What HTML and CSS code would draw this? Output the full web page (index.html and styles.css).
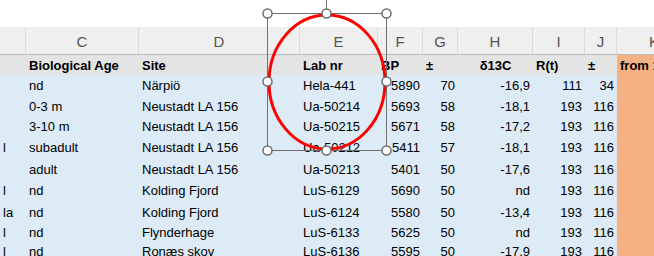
FILE: index.html
```html
<!DOCTYPE html>
<html>
<head>
<meta charset="utf-8">
<link rel="stylesheet" href="styles.css">
</head>
<body>
<div class="sheet">
  <div class="topbar"></div>
  <div class="grid colheads">
    <div class="ch"></div><div class="ch">C</div><div class="ch">D</div><div class="ch">E</div><div class="ch">F</div><div class="ch">G</div><div class="ch">H</div><div class="ch">I</div><div class="ch">J</div><div class="ch k">K</div>
  </div>
  <div class="grid row hdr h20">
    <div class="c"></div><div class="c">Biological Age</div><div class="c">Site</div><div class="c">Lab nr</div><div class="c">BP</div><div class="c">±</div><div class="c mid">δ13C</div><div class="c">R(t)</div><div class="c">±</div><div class="c org">from 1</div>
  </div>
  <div class="grid row h21">
    <div class="c"></div><div class="c">nd</div><div class="c">Närpiö</div><div class="c">Hela-441</div><div class="c r">5890</div><div class="c r">70</div><div class="c r">-16,9</div><div class="c r">111</div><div class="c r">34</div><div class="c org"></div>
  </div>
  <div class="grid row h20">
    <div class="c"></div><div class="c">0-3 m</div><div class="c">Neustadt LA 156</div><div class="c">Ua-50214</div><div class="c r">5693</div><div class="c r">58</div><div class="c r">-18,1</div><div class="c r">193</div><div class="c r">116</div><div class="c org"></div>
  </div>
  <div class="grid row h20">
    <div class="c"></div><div class="c">3-10 m</div><div class="c">Neustadt LA 156</div><div class="c">Ua-50215</div><div class="c r">5671</div><div class="c r">58</div><div class="c r">-17,2</div><div class="c r">193</div><div class="c r">116</div><div class="c org"></div>
  </div>
  <div class="grid row h22">
    <div class="c">l</div><div class="c">subadult</div><div class="c">Neustadt LA 156</div><div class="c">Ua-50212</div><div class="c r">5411</div><div class="c r">57</div><div class="c r">-18,1</div><div class="c r">193</div><div class="c r">116</div><div class="c org"></div>
  </div>
  <div class="grid row h22">
    <div class="c"></div><div class="c">adult</div><div class="c">Neustadt LA 156</div><div class="c">Ua-50213</div><div class="c r">5401</div><div class="c r">50</div><div class="c r">-17,6</div><div class="c r">193</div><div class="c r">116</div><div class="c org"></div>
  </div>
  <div class="grid row h21">
    <div class="c">l</div><div class="c">nd</div><div class="c">Kolding Fjord</div><div class="c">LuS-6129</div><div class="c r">5690</div><div class="c r">50</div><div class="c r">nd</div><div class="c r">193</div><div class="c r">116</div><div class="c org"></div>
  </div>
  <div class="grid row h22">
    <div class="c">la</div><div class="c">nd</div><div class="c">Kolding Fjord</div><div class="c">LuS-6124</div><div class="c r">5580</div><div class="c r">50</div><div class="c r">-13,4</div><div class="c r">193</div><div class="c r">116</div><div class="c org"></div>
  </div>
  <div class="grid row h18">
    <div class="c">l</div><div class="c">nd</div><div class="c">Flynderhage</div><div class="c">LuS-6133</div><div class="c r">5625</div><div class="c r">50</div><div class="c r">nd</div><div class="c r">193</div><div class="c r">116</div><div class="c org"></div>
  </div>
  <div class="grid row h20">
    <div class="c">l</div><div class="c">nd</div><div class="c">Ronæs skov</div><div class="c">LuS-6136</div><div class="c r">5595</div><div class="c r">50</div><div class="c r">-17,9</div><div class="c r">193</div><div class="c r">116</div><div class="c org"></div>
  </div>

  <svg class="shape" width="654" height="256" viewBox="0 0 654 256">
    <line x1="326.5" y1="0" x2="326.5" y2="13.5" stroke="#707070" stroke-width="1"/>
    <rect x="267.5" y="13.5" width="119" height="137" fill="none" stroke="#707070" stroke-width="1"/>
    <ellipse cx="327" cy="82" rx="58" ry="67" fill="none" stroke="#ff0000" stroke-width="3"/>
    <g fill="#ffffff" stroke="#6e6e6e" stroke-width="1.5">
      <circle cx="267.5" cy="13.5" r="4.5"/>
      <circle cx="326.5" cy="13.5" r="4.5"/>
      <circle cx="386.5" cy="13.5" r="4.5"/>
      <circle cx="267.5" cy="81.5" r="4.5"/>
      <circle cx="386.5" cy="81.5" r="4.5"/>
      <circle cx="267.5" cy="150.5" r="4.5"/>
      <circle cx="326.5" cy="150.5" r="4.5"/>
      <circle cx="386.5" cy="150.5" r="4.5"/>
    </g>
  </svg>
</div>
</body>
</html>
```

FILE: styles.css
```css
html, body {
  margin: 0;
  padding: 0;
  background: #ffffff;
}
.sheet {
  position: relative;
  width: 654px;
  height: 256px;
  overflow: hidden;
  font-family: "Liberation Sans", Arial, sans-serif;
  font-size: 13px;
  color: #000000;
}
.topbar {
  height: 27px;
  background: #ffffff;
}
.grid {
  display: grid;
  grid-template-columns: 26px 113px 161px 78px 45px 35px 75px 52px 32px 37px;
}
.colheads {
  height: 27px;
  background: #efefef;
  border-bottom: 1px solid #b9b9b9;
}
.ch {
  display: flex;
  align-items: center;
  justify-content: center;
  color: #555555;
  font-size: 15px;
  border-right: 1px solid #d9d9d9;
  box-sizing: border-box;
  padding-top: 2px;
}
.ch.k {
  justify-content: flex-start;
  padding-left: 32px;
  border-right: none;
}
.row {
  background: #ddebf7;
}
.row.hdr {
  background: #e4e4e4;
  font-weight: bold;
}
.h18 { height: 18px; }
.h20 { height: 20px; }
.h21 { height: 21px; }
.h22 { height: 22px; }
.c {
  display: flex;
  align-items: center;
  padding: 0 3px;
  white-space: nowrap;
  overflow: hidden;
}
.c.r {
  justify-content: flex-end;
}
.c.mid {
  justify-content: center;
}
.c.org {
  background: #f4b183;
}
.shape {
  position: absolute;
  left: 0;
  top: 0;
}
```
